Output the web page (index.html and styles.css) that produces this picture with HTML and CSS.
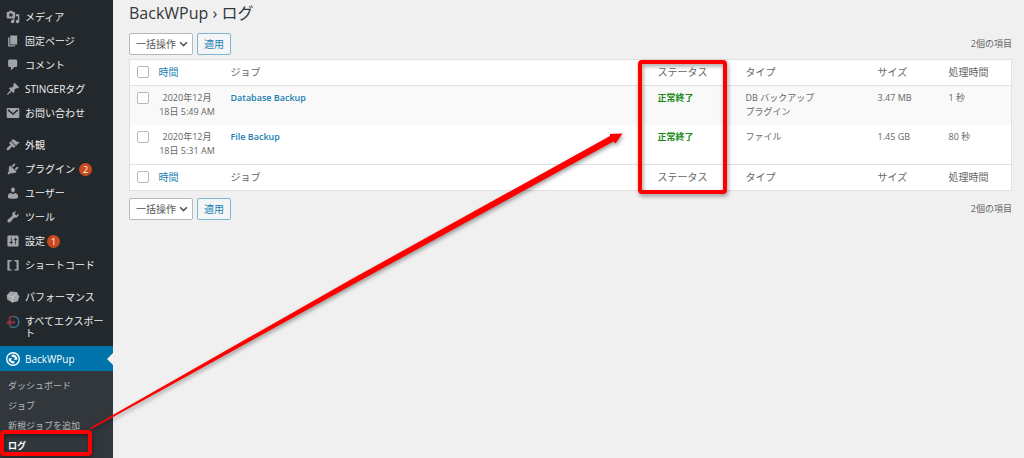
FILE: index.html
```
<!DOCTYPE html>
<html lang="ja">
<head>
	<meta charset="UTF-8">
	<title>BackWPup › ログ</title>
	<link rel="stylesheet" href="styles.css">
</head>
<body>
	<div class="wrap">
		<!-- 左メニュー -->
		<nav class="side">
			<ul class="menu">
				<li><a href="#"><svg class="icon" viewBox="0 0 20 20"><path d="M13 11V4c0-.55-.45-1-1-1h-1.67L9 1H5L3.67 3H2c-.55 0-1 .45-1 1v7c0 .55.45 1 1 1h10c.55 0 1-.45 1-1zM7 4.500a2.500 2.500 0 1 1 0 5 2.500 2.500 0 0 1 0-5zM14 6h5v10.500c0 1.380-1.120 2.500-2.500 2.500S14 17.880 14 16.500s1.120-2.500 2.500-2.500c.17 0 .34.02.5.05V9h-3V6zm-4 8.050V13h2v3.500c0 1.380-1.120 2.500-2.500 2.500S7 17.880 7 16.500 8.120 14 9.500 14c.17 0 .34.02.5.05z" fill-rule="evenodd"/></svg><span>メディア</span></a></li>
				<li><a href="#"><svg class="icon" viewBox="0 0 20 20"><path d="M6 15V2h10v13H6zm-1 1h8v2H3V5h2v11z"/></svg><span>固定ページ</span></a></li>
				<li><a href="#"><svg class="icon" viewBox="0 0 20 20"><path d="M5 2h9c1.1 0 2 .9 2 2v7c0 1.1-.9 2-2 2h-2l-5 5v-5H5c-1.1 0-2-.9-2-2V4c0-1.1.9-2 2-2z"/></svg><span>コメント</span></a></li>
				<li><a href="#"><svg class="icon" viewBox="0 0 20 20"><path d="M10.440 3.020l1.820-1.820 6.360 6.350-1.830 1.820c-1.050-.68-2.480-.57-3.410.36l-.75.75c-.92.93-1.040 2.350-.35 3.410l-1.830 1.820-2.410-2.410-2.800 2.790c-.42.42-3.380 2.710-3.800 2.290s1.860-3.390 2.280-3.810l2.790-2.790L4.100 9.360l1.830-1.820c1.050.69 2.480.57 3.400-.36l.75-.75c.93-.92 1.050-2.350.36-3.410z"/></svg><span>STINGERタグ</span></a></li>
				<li><a href="#"><svg class="icon" viewBox="0 0 20 20"><path d="M2.500 3h15c.8 0 1.500.7 1.500 1.500v11c0 .8-.7 1.500-1.500 1.500h-15c-.8 0-1.500-.7-1.500-1.500v-11C1 3.700 1.700 3 2.500 3z"/><path class="cut" d="M3 5.500l7 6 7-6"/></svg><span>お問い合わせ</span></a></li>
			</ul>
			<ul class="menu">
				<li><a href="#"><svg class="icon" viewBox="0 0 20 20"><path d="M14.480 11.060L7.410 3.990l1.500-1.500c.5-.56 2.300-.47 3.510.32 1.210.8 1.430 1.280 2.910 2.100 1.180.64 2.450 1.260 4.450.85zm-.71.71L6.700 4.700 4.930 6.470c-.39.39-.39 1.020 0 1.410l1.060 1.060c.39.39.39 1.030 0 1.420-.6.6-1.430 1.110-2.210 1.690-.35.26-.7.53-1.010.84C1.430 14.230.4 16.080 1.400 17.070c.99 1 2.840-.03 4.180-1.360.31-.31.58-.66.85-1.020.57-.78 1.080-1.610 1.690-2.210.39-.39 1.020-.39 1.410 0l1.060 1.060c.39.39 1.020.39 1.410 0z"/></svg><span>外観</span></a></li>
				<li><a href="#"><svg class="icon" viewBox="0 0 20 20"><path d="M13.110 4.360L9.870 7.600 8 5.730l3.240-3.240c.35-.34 1.050-.2 1.560.32.52.51.66 1.210.31 1.550zm-8 1.770l.91-1.120 9.010 9.010-1.190.84c-.71.71-2.630 1.160-3.820 1.160H6.140L4.900 17.260c-.59.59-1.540.59-2.120 0-.59-.58-.59-1.530 0-2.120l1.240-1.240v-3.880c0-1.130.4-3.190 1.090-3.890zm7.260 3.970l3.240-3.240c.34-.35 1.040-.21 1.550.31.52.51.66 1.210.31 1.550l-3.240 3.250z"/></svg><span>プラグイン</span><b class="count">2</b></a></li>
				<li><a href="#"><svg class="icon" viewBox="0 0 20 20"><path d="M10 9.250c-2.270 0-2.730-3.440-2.730-3.440C7 4.020 7.820 2 9.970 2c2.160 0 2.980 2.020 2.710 3.810 0 0-.41 3.440-2.680 3.440zm0 2.570L12.720 10c2.390 0 4.520 2.330 4.520 4.530v2.490s-3.650 1.130-7.240 1.130c-3.650 0-7.240-1.130-7.240-1.130v-2.490c0-2.250 1.940-4.480 4.470-4.480z"/></svg><span>ユーザー</span></a></li>
				<li><a href="#"><svg class="icon" viewBox="0 0 20 20"><path d="M16.680 9.770c-1.340 1.340-3.300 1.670-4.950.99l-5.410 6.520c-.99.99-2.590.99-3.580 0s-.99-2.590 0-3.570l6.520-5.420c-.68-1.650-.35-3.610.99-4.950 1.280-1.280 3.120-1.620 4.720-1.060l-2.890 2.890 2.820 2.820 2.860-2.870c.53 1.580.18 3.390-1.080 4.650z"/></svg><span>ツール</span></a></li>
				<li><a href="#"><svg class="icon" viewBox="0 0 20 20"><path d="M18 16V4c0-1.1-.9-2-2-2H4c-1.1 0-2 .9-2 2v12c0 1.1.9 2 2 2h12c1.1 0 2-.9 2-2zM8 11h1c.55 0 1 .45 1 1s-.45 1-1 1H8v1.500c0 .28-.22.5-.5.5s-.5-.22-.5-.5V13H6c-.55 0-1-.45-1-1s.45-1 1-1h1V5.500c0-.28.22-.5.5-.5s.5.22.5.5V11zm5-2h-1c-.55 0-1-.45-1-1s.45-1 1-1h1V5.500c0-.28.22-.5.5-.5s.5.22.5.5V7h1c.55 0 1 .45 1 1s-.45 1-1 1h-1v5.500c0 .28-.22.5-.5.5s-.5-.22-.5-.5V9z" fill-rule="evenodd"/></svg><span>設定</span><b class="count near">1</b></a></li>
				<li><a href="#"><svg class="icon" viewBox="0 0 20 20"><path d="M2 3h6v2H5v11h3v2H2zM12 3h6v15h-6v-2h3V5h-3z"/></svg><span>ショートコード</span></a></li>
			</ul>
			<ul class="menu">
				<li><a href="#"><svg class="icon" viewBox="0 0 20 20"><path d="M6 2l9 1 4 6-2 7-8 2-7-4-1-6z"/><path class="line" d="M2 8l8 2 6-6M10 10l-1 8"/></svg><span>パフォーマンス</span></a></li>
				<li class="two"><a href="#"><svg class="icon" viewBox="0 0 20 20"><path class="ring red" d="M4 5a8 8 0 0 1 7-3"/><path class="ring blue" d="M11 2a8 8 0 0 1 2 15.500"/><path class="ring green" d="M13 17.500a8 8 0 0 1-8-2"/><path class="mark" d="M0 11l7-6v4h6v3H7v4z"/></svg><span>すべてエクスポート</span></a></li>
				<li class="now"><a href="#"><svg class="icon" viewBox="0 0 20 20"><circle cx="10" cy="10" r="10"/><circle class="hole" cx="10" cy="10" r="8"/><path d="M8 4a6 6 0 0 1 7 3l1-1v5h-5l2-2a4 4 0 0 0-5-2zM12 16a6 6 0 0 1-7-3l-1 1V9h5l-2 2a4 4 0 0 0 5 2z"/></svg><span>BackWPup</span></a></li>
			</ul>
			<ul class="sub">
				<li><a href="#">ダッシュボード</a></li>
				<li><a href="#">ジョブ</a></li>
				<li><a href="#">新規ジョブを追加</a></li>
				<li><a href="#" class="on">ログ</a></li>
			</ul>
		</nav>

		<!-- ログ一覧 -->
		<main class="main">
			<h1>BackWPup › ログ</h1>
			<div class="bar">
				<div class="pick">
					<select aria-label="一括操作">
						<option>一括操作</option>
						<option>削除</option>
					</select>
					<svg class="arrow" viewBox="0 0 8 6"><path d="M1 1l3 3 3-3"/></svg>
				</div>
				<button type="button">適用</button>
				<span class="total">2個の項目</span>
			</div>
			<table class="log">
				<colgroup>
					<col class="c-check">
					<col class="c-time">
					<col>
					<col class="c-status">
					<col class="c-type">
					<col class="c-size">
					<col class="c-run">
				</colgroup>
				<thead>
					<tr>
						<td class="check"><input type="checkbox" aria-label="すべて選択"></td>
						<th><a href="#">時間</a></th>
						<th>ジョブ</th>
						<th>ステータス</th>
						<th>タイプ</th>
						<th>サイズ</th>
						<th>処理時間</th>
					</tr>
				</thead>
				<tbody>
					<tr>
						<td class="check"><input type="checkbox" aria-label="Database Backup"></td>
						<td class="time">2020年12月<br>18日 5:49 AM</td>
						<td><a href="#" class="job">Database Backup</a></td>
						<td class="ok">正常終了</td>
						<td>DB バックアップ<br>プラグイン</td>
						<td>3.47 MB</td>
						<td>1 秒</td>
					</tr>
					<tr>
						<td class="check"><input type="checkbox" aria-label="File Backup"></td>
						<td class="time">2020年12月<br>18日 5:31 AM</td>
						<td><a href="#" class="job">File Backup</a></td>
						<td class="ok">正常終了</td>
						<td>ファイル</td>
						<td>1.45 GB</td>
						<td>80 秒</td>
					</tr>
				</tbody>
				<tfoot>
					<tr>
						<td class="check"><input type="checkbox" aria-label="すべて選択"></td>
						<th><a href="#">時間</a></th>
						<th>ジョブ</th>
						<th>ステータス</th>
						<th>タイプ</th>
						<th>サイズ</th>
						<th>処理時間</th>
					</tr>
				</tfoot>
			</table>
			<div class="bar">
				<div class="pick">
					<select aria-label="一括操作">
						<option>一括操作</option>
						<option>削除</option>
					</select>
					<svg class="arrow" viewBox="0 0 8 6"><path d="M1 1l3 3 3-3"/></svg>
				</div>
				<button type="button">適用</button>
				<span class="total">2個の項目</span>
			</div>
		</main>
	</div>

	<!-- 赤い枠と矢印 -->
	<svg class="note" width="1024" height="458" viewBox="0 0 1024 458">
		<rect x="2" y="432" width="88" height="22" rx="2"/>
		<rect x="640" y="62" width="85" height="130" rx="2"/>
		<path d="M90 428L350 280 610 136 610 134 622.500 133.500 615.500 143.500 613.500 141.500 352 285 90.500 429.500z"/>
	</svg>
</body>
</html>
```
FILE: styles.css
```
*{
	margin:0;
	padding:0;
	box-sizing: border-box;
}
body{
	position: relative;
	background: #f0f0f0;
	color:#666;
	font-family: "Open Sans","Noto Sans CJK JP",sans-serif;
	font-size: 9px;
	line-height: 14px;
}
ul{
	list-style: none;
}
a{
	color:#1a7fb3;
	text-decoration: none;
}
.wrap{
	display: flex;
	min-height: 100vh;
}

/* 左メニュー */
.side{
	width: 113px;
	flex:none;
	padding-top: 5px;
	background: #23282d;
}
.menu{
	margin-bottom: 8px;
}
.menu:nth-child(3){
	margin-bottom: 0;
}
.menu a{
	display: flex;
	align-items: center;
	min-height: 24px;
	padding:0 8px 0 6px;
	color:#eee;
	font-size: 10px;
	line-height: 12px;
}
.icon{
	flex:none;
	width: 14px;
	height: 14px;
	margin-right: 5px;
	fill:#a0a5aa;
}
.cut,.line{
	fill:none;
	stroke:#23282d;
	stroke-width: 2;
}
.line{
	stroke:#d0d2d4;
	stroke-width: 1;
}
.ring{
	fill:none;
	stroke-width: 2;
}
.red{
	stroke:#a33a45;
}
.blue{
	stroke:#3c6f94;
}
.green{
	stroke:#35776d;
}
.mark{
	fill:#8c3440;
}
.count{
	width: 13px;
	height: 13px;
	margin-left: 4px;
	border-radius: 50%;
	background: #ca4a1f;
	color:#fff;
	font-size: 9px;
	font-weight: 400;
	line-height: 13px;
	text-align: center;
}
.near{
	margin-left: 2px;
}
.menu .two a{
	align-items: flex-start;
	height: 37px;
	padding-top: 6px;
}
.menu .now a{
	position: relative;
	height: 25px;
	background: #0073aa;
	color:#fff;
}
.now .icon{
	fill:#fff;
}
.now .hole{
	fill:#0073aa;
}
.now a::after{
	content: "";
	position: absolute;
	right:0;
	top:7px;
	border:6px solid transparent;
	border-left: 0;
	border-right-color: #f0f0f0;
}
.sub{
	padding:5px 8px 2px;
	background: #32373c;
}
.sub a{
	display: block;
	color:#b4b9be;
	line-height: 20px;
}
.sub .on{
	color:#fff;
	font-weight: 700;
}

/* ログ一覧 */
.main{
	flex:1;
	padding:0 12px 0 16px;
}
h1{
	color:#32373c;
	font-size: 16px;
	font-weight: 400;
	line-height: 26px;
}
.bar{
	display: flex;
	gap:4px;
	margin:7px 0 4px;
}
.pick{
	position: relative;
	width: 64px;
}
select,button{
	height: 22px;
	border:1px solid #b4b9be;
	border-radius: 2px;
	background: #fff;
	color:#555;
	font-family: inherit;
	font-size: 10px;
	line-height: 20px;
}
select{
	width: 100%;
	padding-left: 6px;
	appearance: none;
}
.arrow{
	position: absolute;
	right:5px;
	top:8px;
	width: 9px;
	height: 7px;
	fill:none;
	stroke:#555;
	stroke-width: 1.4;
	pointer-events: none;
}
button{
	width: 34px;
	border-color: #7fb7d0;
	background: #f3f5f6;
	color:#1a7fb3;
	cursor: pointer;
}
.total{
	margin-left: auto;
	line-height: 22px;
}
.log{
	width: 100%;
	table-layout: fixed;
	border-collapse: collapse;
	border:1px solid #dfe1e3;
	background: #fff;
}
.c-check{
	width: 22px;
}
.c-time{
	width: 72px;
}
.c-status{
	width: 88px;
}
.c-type{
	width: 132px;
}
.c-size{
	width: 71px;
}
.c-run{
	width: 70px;
}
.log th,.log td{
	padding:5px 7px 6px;
	text-align: left;
	vertical-align: top;
}
.log th{
	font-size: 10px;
	font-weight: 400;
}
.log thead tr{
	border-bottom: 1px solid #dfe1e3;
}
.log tfoot tr{
	border-top: 1px solid #dfe1e3;
}
.log tbody tr:first-child{
	background: #f9f9f9;
}
.log .check{
	padding:6px 0 0 7px;
}
.log .time{
	padding-right: 8px;
	text-align: center;
}
input{
	display: block;
	appearance: none;
	width: 12px;
	height: 12px;
	border:1px solid #b4b9be;
	border-radius: 2px;
	background: #fff;
}
.job{
	font-weight: 600;
}
.log .ok{
	color:#1b8a1b;
	font-weight: 700;
}

/* 注釈 */
.note{
	position: absolute;
	left:0;
	top:0;
	pointer-events: none;
	filter:drop-shadow(1px 2px 2px rgba(0,0,0,.4));
}
.note rect{
	fill:none;
	stroke:#f00;
	stroke-width: 4;
}
.note path{
	fill:#f00;
}
```
